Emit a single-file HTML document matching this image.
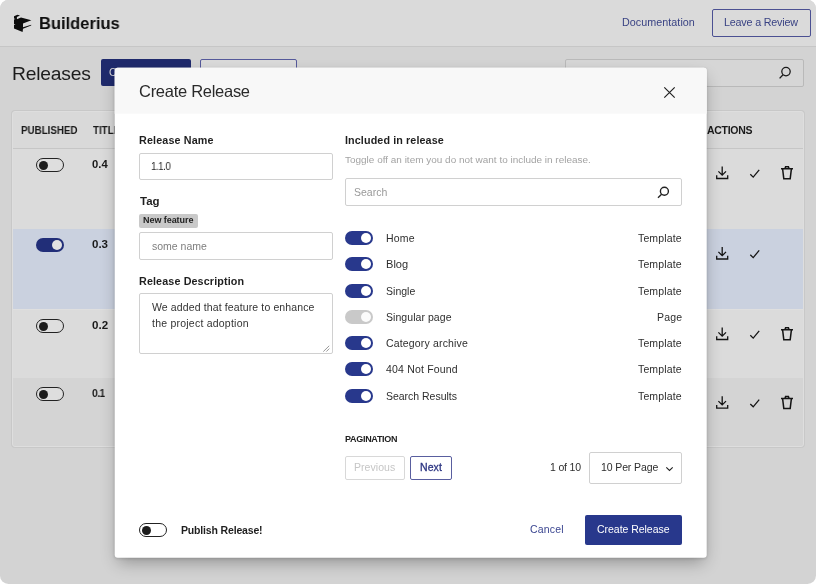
<!DOCTYPE html>
<html lang="en">
<head>
<meta charset="utf-8">
<title>Builderius – Releases</title>
<style>
*{box-sizing:border-box;margin:0;padding:0}
html,body{width:816px;height:584px;background:#fff;overflow:hidden}
body{font-family:"Liberation Sans",sans-serif;color:#222;position:relative}
.app{position:absolute;left:0;top:0;width:816px;height:584px;border-radius:8.5px;overflow:hidden;background:#d3d3d3}
.abs{position:absolute;white-space:nowrap;line-height:1}
.topbar{position:absolute;left:0;top:0;width:816px;height:47px;background:#dadada;border-bottom:1px solid #c6c6c6}
.t{position:absolute;white-space:nowrap;line-height:1;transform-origin:0 0;will-change:transform}
.tog{position:absolute;width:28px;height:14px;border-radius:7px}
.tog.off{border:1px solid #222;background:#dedede}
.tog.off i{position:absolute;left:1.5px;top:1.5px;width:9px;height:9px;border-radius:50%;background:#1c1c1c}
.tog.on{background:#212e78}
.tog.on i{position:absolute;right:2px;top:2px;width:10px;height:10px;border-radius:50%;background:#e2e2e2}
.m .tog.on{background:#28388c}
.m .tog.on i{background:#fff}
.m .tog.dis{background:#c9c9c9}
.m .tog.dis i{position:absolute;right:2px;top:2px;width:10px;height:10px;border-radius:50%;background:#fbfbfb}
.m .tog.off{background:#fff;border-color:#222}
svg{position:absolute;overflow:visible}
.inp{border:1px solid #d0d0d0;border-radius:2px;background:#fff}
</style>
</head>
<body>
<div class="app">
  <!-- top bar -->
  <div class="topbar"></div>
  <svg style="left:0;top:0" width="40" height="40" viewBox="0 0 40 40"><path fill="#0c0c0c" d="M14 16.2 L17.5 14.7 L20 15.4 L16.9 17 L16.9 19.3 L21 17.5 L31.4 20.3 L23 23.6 L23 27.2 L31.2 24.8 L31.2 25.6 L23 28.7 L22.6 31.9 L14 28.6 L14 24.9 L15.6 24.4 L14 23.9 L14 19.5 L15.6 19 L14 18.5 Z"/></svg>
  <div class="t" id="brand" style="left:38.67px;top:15.38px;font-size:17.25px;font-weight:700;transform:scaleX(0.9568);color:#0e0e0e">Builderius</div>
  <div class="t" id="doc" style="left:621.75px;top:16.62px;font-size:10.75px;letter-spacing:0.044px;color:#3a4384">Documentation</div>
  <div class="abs" style="left:712px;top:9px;width:99px;height:28px;border:1px solid #4b5092;border-radius:2px"></div>
  <div class="t" id="review" style="left:723.65px;top:16.62px;font-size:10.75px;letter-spacing:-0.19px;color:#3a4384">Leave a Review</div>

  <!-- page heading row -->
  <div class="t" id="h1" style="left:11.80px;top:63.88px;font-size:19.25px;letter-spacing:-0.207px;color:#1c1c1c">Releases</div>
  <div class="abs" style="left:101px;top:59px;width:90px;height:27px;background:#1f2a6c;border-radius:2px"></div>
  <div class="t" id="cr0" style="left:109.10px;top:66.75px;font-size:10.5px;letter-spacing:-0.032px;color:#d8d8d8">Create Release</div>
  <div class="abs" style="left:200px;top:59px;width:97px;height:27.5px;border:1px solid #55599a;border-radius:2px;background:#dadada"></div>
  <div class="abs" style="left:565px;top:59px;width:239px;height:28px;border:1px solid #b9b9b9;border-radius:2px;background:#d6d6d6"></div>
  <svg style="left:778px;top:66px" width="14" height="14" viewBox="0 0 14 14" fill="none" stroke="#1a1a1a" stroke-width="1.3"><circle cx="8" cy="5.6" r="4.2"/><path d="M5 8.8 L1.6 12.4"/></svg>

  <!-- table -->
  <div class="abs" id="table" style="left:12px;top:111px;width:792px;height:336px;border:1px solid #dedede;border-radius:3px;background:#dadada;overflow:hidden;box-shadow:0 0 0 1px #c8c8c8">
    <div class="abs" style="left:0;top:0;width:792px;height:37px;background:#d9d9d9;border-bottom:1px solid #c6c6c6"></div>
    <div class="abs" style="left:0;top:37px;width:792px;height:80px;background:#dbdbdb"></div>
    <div class="abs" style="left:0;top:117px;width:792px;height:80px;background:#cad1df"></div>
    <div class="abs" style="left:0;top:197px;width:792px;height:69px;background:#dbdbdb;border-top:1px solid #dfdfdf"></div>
    <div class="abs" style="left:0;top:266px;width:792px;height:70px;background:#d4d4d4"></div>
  </div>
  <div class="t" id="th1" style="left:21.05px;top:124.75px;font-size:10.5px;font-weight:700;transform:scaleX(0.9322);color:#1a1a1a">PUBLISHED</div>
  <div class="t" id="th2" style="left:93.20px;top:124.75px;font-size:10.5px;font-weight:700;transform:scaleX(0.9322);color:#1a1a1a">TITLE</div>
  <div class="t" id="th3" style="left:706.85px;top:124.75px;font-size:10.5px;font-weight:700;letter-spacing:-0.283px;color:#1a1a1a">ACTIONS</div>

  <div class="tog off" style="left:36px;top:158px"><i></i></div>
  <div class="tog on" style="left:36px;top:238px"><i></i></div>
  <div class="tog off" style="left:36px;top:319px"><i></i></div>
  <div class="tog off" style="left:36px;top:387px"><i></i></div>
  <div class="t" id="v1" style="left:91.78px;top:158.62px;font-size:10.75px;font-weight:700;transform:scaleX(1.0472);color:#1a1a1a">0.4</div>
  <div class="t" id="v2" style="left:91.77px;top:238.62px;font-size:10.75px;font-weight:700;transform:scaleX(1.0730);color:#1a1a1a">0.3</div>
  <div class="t" id="v3" style="left:91.77px;top:319.62px;font-size:10.75px;font-weight:700;transform:scaleX(1.0768);color:#1a1a1a">0.2</div>
  <div class="t" id="v4" style="left:91.82px;top:387.62px;font-size:10.75px;font-weight:700;letter-spacing:-0.55px;transform:scaleX(0.9571);color:#1a1a1a">0.1</div>

  <!-- action icons -->
  <svg style="left:0;top:0" width="816" height="584" viewBox="0 0 816 584" fill="none" stroke="#141414" stroke-width="1.3">
    <defs>
      <g id="dl"><path d="M6.2 0 V8.6 M2.4 4.9 L6.2 8.7 L10 4.9 M0.7 8.8 V12 H11.7 V8.8"/></g>
      <g id="ck"><path d="M0.3 4.8 L3.2 7.6 L9.2 0.4"/></g>
      <g id="tr"><path d="M0 2.4 H12 M4 2.2 L4.6 0.4 H7.4 L8 2.2 M1.6 2.6 L2.8 12.4 H9.2 L10.4 2.6" stroke-width="1.5"/></g>
    </defs>
    <use href="#dl" x="716" y="166.5"/><use href="#ck" x="750" y="169.5"/><use href="#tr" x="781" y="166.3"/>
    <use href="#dl" x="716" y="247"/><use href="#ck" x="750" y="250"/>
    <use href="#dl" x="716" y="327.5"/><use href="#ck" x="750" y="330.5"/><use href="#tr" x="781" y="327.3"/>
    <use href="#dl" x="716" y="396.2"/><use href="#ck" x="750" y="399.2"/><use href="#tr" x="781" y="396"/>
  </svg>

  <!-- modal -->
  <div class="abs" id="modal" style="left:115px;top:68px;width:592px;height:490px;transform:translate(-0.3px,-0.3px);background:#fff;border-radius:3px;box-shadow:0 7px 16px -3px rgba(0,0,0,.32),0 1px 3px rgba(0,0,0,.12)">
    <div class="abs" style="left:0;top:0;width:100%;height:45.5px;background:#f8f8f8;border-radius:3px 3px 0 0"></div>
  </div>
  <div class="m">
    <div class="t" id="mtitle" style="left:138.93px;top:82.75px;font-size:16.5px;letter-spacing:-0.277px;color:#2a2a2a">Create Release</div>
    <svg style="left:664px;top:86.5px" width="11" height="11" viewBox="0 0 11 11" fill="none" stroke="#222" stroke-width="1.2"><path d="M0.3 0.3 L10.7 10.7 M10.7 0.3 L0.3 10.7"/></svg>

    <div class="t" id="l_name" style="left:138.90px;top:134.62px;font-size:10.75px;font-weight:700;letter-spacing:0.138px;color:#1f1f1f">Release Name</div>
    <div class="abs inp" style="left:139px;top:153px;width:194px;height:27px"></div>
    <div class="t" id="in1" style="left:150.96px;top:160.75px;font-size:10.5px;letter-spacing:-0.5px;transform:scaleX(0.9274);color:#262626">1.1.0</div>
    <div class="t" id="l_tag" style="left:139.89px;top:195.62px;font-size:10.75px;font-weight:700;transform:scaleX(1.0687);color:#1f1f1f">Tag</div>
    <div class="abs" style="left:139px;top:214px;width:59px;height:14px;background:#c9c9c9;border-radius:2px"></div>
    <div class="t" id="badge" style="left:143.10px;top:215.50px;font-size:9px;font-weight:700;letter-spacing:-0.061px;color:#222">New feature</div>
    <div class="abs inp" style="left:139px;top:232px;width:194px;height:28px"></div>
    <div class="t" id="in2" style="left:151.75px;top:240.75px;font-size:10.5px;letter-spacing:0.004px;color:#7e7e7e">some name</div>
    <div class="t" id="l_desc" style="left:138.90px;top:275.62px;font-size:10.75px;font-weight:700;letter-spacing:0.125px;color:#1f1f1f">Release Description</div>
    <div class="abs inp" style="left:139px;top:293px;width:194px;height:61px"></div>
    <div class="t" id="ta1" style="left:152.00px;top:301.75px;font-size:10.5px;letter-spacing:0.124px;color:#333">We added that feature to enhance</div>
    <div class="t" id="ta2" style="left:151.85px;top:317.75px;font-size:10.5px;letter-spacing:0.227px;color:#333">the project adoption</div>
    <svg style="left:0;top:0" width="816" height="584" viewBox="0 0 816 584" fill="none" stroke="#7d7d7d" stroke-width="0.8"><path d="M323.3 351.6 L329.2 345.8 M326.3 351.6 L329.3 348.6"/></svg>

    <div class="t" id="l_inc" style="left:344.60px;top:134.62px;font-size:10.75px;font-weight:700;letter-spacing:0.108px;color:#1f1f1f">Included in release</div>
    <div class="t" id="sub" style="left:345.38px;top:156.38px;font-size:9.25px;transform:scaleX(1.0774);color:#a3a3a3">Toggle off an item you do not want to include in release.</div>
    <div class="abs inp" style="left:345px;top:178px;width:337px;height:28px"></div>
    <div class="t" id="sph" style="left:354.05px;top:186.75px;font-size:10.5px;letter-spacing:0.014px;color:#999">Search</div>
    <svg style="left:657px;top:186px" width="13" height="13" viewBox="0 0 13 13" fill="none" stroke="#222" stroke-width="1.4"><circle cx="7.4" cy="5.2" r="4"/><path d="M4.6 8.2 L1 11.8"/></svg>

    <div class="tog on" style="left:345px;top:231px"><i></i></div><div class="t" id="r0" style="left:385.65px;top:232.75px;font-size:10.5px;letter-spacing:0.194px;color:#2e2e2e">Home</div><div class="t" id="y0" style="left:638.40px;top:232.75px;font-size:10.5px;letter-spacing:0.134px;color:#2e2e2e">Template</div>
    <div class="tog on" style="left:345px;top:257px"><i></i></div><div class="t" id="r1" style="left:385.60px;top:258.75px;font-size:10.5px;transform:scaleX(1.0550);color:#2e2e2e">Blog</div><div class="t" id="y1" style="left:638.40px;top:258.75px;font-size:10.5px;letter-spacing:0.134px;color:#2e2e2e">Template</div>
    <div class="tog on" style="left:345px;top:284px"><i></i></div><div class="t" id="r2" style="left:386.05px;top:285.75px;font-size:10.5px;letter-spacing:0.02px;color:#2e2e2e">Single</div><div class="t" id="y2" style="left:638.40px;top:285.75px;font-size:10.5px;letter-spacing:0.134px;color:#2e2e2e">Template</div>
    <div class="tog dis" style="left:345px;top:310px"><i></i></div><div class="t" id="r3" style="left:386.05px;top:311.75px;font-size:10.5px;letter-spacing:0.058px;color:#2e2e2e">Singular page</div><div class="t" id="y3" style="right:133.86px;top:311.75px;font-size:10.5px;letter-spacing:0.2px;color:#2e2e2e">Page</div>
    <div class="tog on" style="left:345px;top:336px"><i></i></div><div class="t" id="r4" style="left:386.00px;top:337.75px;font-size:10.5px;letter-spacing:0.161px;color:#2e2e2e">Category archive</div><div class="t" id="y4" style="left:638.40px;top:337.75px;font-size:10.5px;letter-spacing:0.134px;color:#2e2e2e">Template</div>
    <div class="tog on" style="left:345px;top:362px"><i></i></div><div class="t" id="r5" style="left:386.30px;top:363.75px;font-size:10.5px;letter-spacing:0.185px;color:#2e2e2e">404 Not Found</div><div class="t" id="y5" style="left:638.40px;top:363.75px;font-size:10.5px;letter-spacing:0.134px;color:#2e2e2e">Template</div>
    <div class="tog on" style="left:345px;top:389px"><i></i></div><div class="t" id="r6" style="left:386.05px;top:390.75px;font-size:10.5px;letter-spacing:-0.023px;color:#2e2e2e">Search Results</div><div class="t" id="y6" style="left:638.40px;top:390.75px;font-size:10.5px;letter-spacing:0.134px;color:#2e2e2e">Template</div>

    <div class="t" id="pag" style="left:344.80px;top:434.50px;font-size:9px;font-weight:700;letter-spacing:-0.296px;color:#222">PAGINATION</div>
    <div class="abs" style="left:345px;top:456px;width:60px;height:24px;border:1px solid #d8d8d8;border-radius:2px"></div>
    <div class="t" id="prev" style="left:353.85px;top:461.75px;font-size:10.5px;letter-spacing:0.05px;color:#c6c6c6">Previous</div>
    <div class="abs" style="left:410px;top:456px;width:42px;height:24px;border:1px solid #595e9f;border-radius:2px"></div>
    <div class="t" id="next" style="left:419.95px;top:461.75px;font-size:10.5px;letter-spacing:0.076px;-webkit-text-stroke:0.3px #2c3582;color:#2c3582">Next</div>
    <div class="t" id="pof" style="left:550.20px;top:461.75px;font-size:10.5px;letter-spacing:-0.187px;color:#2e2e2e">1 of 10</div>
    <div class="abs inp" style="left:589px;top:452px;width:93px;height:32px"></div>
    <div class="t" id="pp" style="left:600.80px;top:461.75px;font-size:10.5px;letter-spacing:-0.114px;color:#2e2e2e">10 Per Page</div>
    <svg style="left:665.5px;top:466.8px" width="7" height="4" viewBox="0 0 7 4" fill="none" stroke="#222" stroke-width="1.1"><path d="M0.3 0.3 L3.5 3.4 L6.7 0.3"/></svg>

    <div class="tog off" style="left:139px;top:523px"><i></i></div>
    <div class="t" id="pub" style="left:180.80px;top:524.75px;font-size:10.5px;font-weight:700;letter-spacing:-0.162px;color:#1f1f1f">Publish Release!</div>
    <div class="t" id="cancel" style="left:530.30px;top:523.75px;font-size:10.5px;letter-spacing:0.18px;color:#3a4590">Cancel</div>
    <div class="abs" style="left:585px;top:515px;width:97px;height:30px;background:#28388c;border-radius:2px"></div>
    <div class="t" id="create" style="left:596.80px;top:523.75px;font-size:10.5px;letter-spacing:-0.032px;color:#fff">Create Release</div>
  </div>
</div>
</body>
</html>
